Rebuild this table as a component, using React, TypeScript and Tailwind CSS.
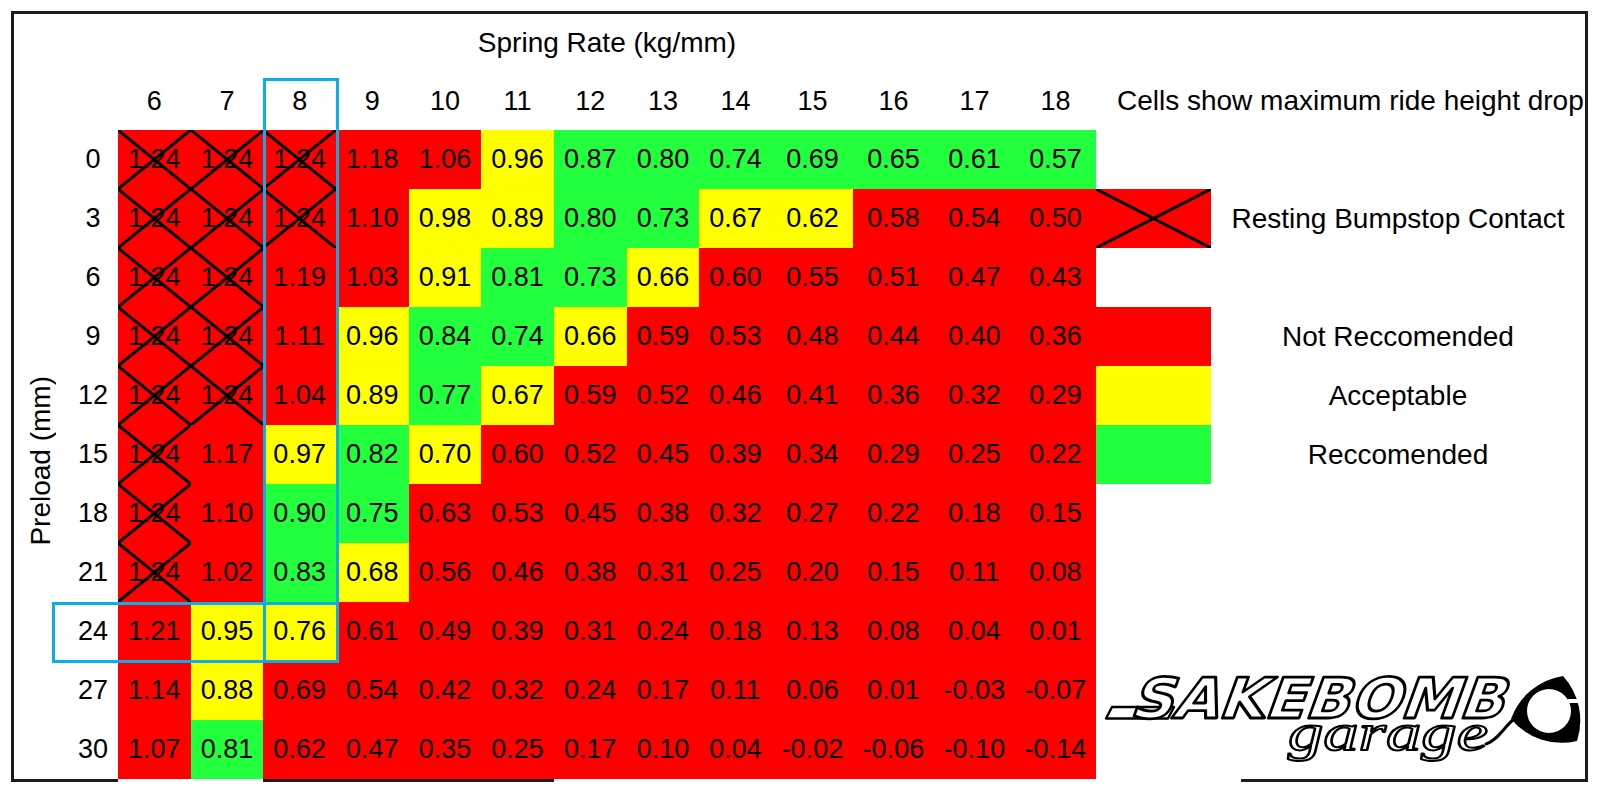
import React from 'react';

type Row = { preload: number; values: string[]; tones: string; crossed: number };

const RATES = [6, 7, 8, 9, 10, 11, 12, 13, 14, 15, 16, 17, 18];

const ROWS: Row[] = [
  { preload: 0, crossed: 3, tones: 'rrrrryggggggg', values: ['1.24', '1.24', '1.24', '1.18', '1.06', '0.96', '0.87', '0.80', '0.74', '0.69', '0.65', '0.61', '0.57'] },
  { preload: 3, crossed: 3, tones: 'rrrryyggyyrrr', values: ['1.24', '1.24', '1.24', '1.10', '0.98', '0.89', '0.80', '0.73', '0.67', '0.62', '0.58', '0.54', '0.50'] },
  { preload: 6, crossed: 2, tones: 'rrrryggyrrrrr', values: ['1.24', '1.24', '1.19', '1.03', '0.91', '0.81', '0.73', '0.66', '0.60', '0.55', '0.51', '0.47', '0.43'] },
  { preload: 9, crossed: 2, tones: 'rrryggyrrrrrr', values: ['1.24', '1.24', '1.11', '0.96', '0.84', '0.74', '0.66', '0.59', '0.53', '0.48', '0.44', '0.40', '0.36'] },
  { preload: 12, crossed: 2, tones: 'rrrygyrrrrrrr', values: ['1.24', '1.24', '1.04', '0.89', '0.77', '0.67', '0.59', '0.52', '0.46', '0.41', '0.36', '0.32', '0.29'] },
  { preload: 15, crossed: 1, tones: 'rrygyrrrrrrrr', values: ['1.24', '1.17', '0.97', '0.82', '0.70', '0.60', '0.52', '0.45', '0.39', '0.34', '0.29', '0.25', '0.22'] },
  { preload: 18, crossed: 1, tones: 'rrggrrrrrrrrr', values: ['1.24', '1.10', '0.90', '0.75', '0.63', '0.53', '0.45', '0.38', '0.32', '0.27', '0.22', '0.18', '0.15'] },
  { preload: 21, crossed: 1, tones: 'rrgyrrrrrrrrr', values: ['1.24', '1.02', '0.83', '0.68', '0.56', '0.46', '0.38', '0.31', '0.25', '0.20', '0.15', '0.11', '0.08'] },
  { preload: 24, crossed: 0, tones: 'ryyrrrrrrrrrr', values: ['1.21', '0.95', '0.76', '0.61', '0.49', '0.39', '0.31', '0.24', '0.18', '0.13', '0.08', '0.04', '0.01'] },
  { preload: 27, crossed: 0, tones: 'ryrrrrrrrrrrr', values: ['1.14', '0.88', '0.69', '0.54', '0.42', '0.32', '0.24', '0.17', '0.11', '0.06', '0.01', '-0.03', '-0.07'] },
  { preload: 30, crossed: 0, tones: 'rgrrrrrrrrrrr', values: ['1.07', '0.81', '0.62', '0.47', '0.35', '0.25', '0.17', '0.10', '0.04', '-0.02', '-0.06', '-0.10', '-0.14'] },
];

// the last four columns are wider (they hold negative numbers)
const colWidth = (i: number) => (i < 9 ? 'w-[72.67px]' : 'w-[81px]');

const toneBg = (t: string) =>
  t === 'g' ? 'bg-[#21ff3d]' : t === 'y' ? 'bg-[#ffff00]' : 'bg-[#ff0000]';

function Cross() {
  return (
    <svg className="absolute inset-0 h-full w-full" viewBox="0 0 100 100" preserveAspectRatio="none">
      <line x1="0" y1="0" x2="100" y2="100" stroke="#000" strokeWidth="3" vectorEffect="non-scaling-stroke" />
      <line x1="100" y1="0" x2="0" y2="100" stroke="#000" strokeWidth="3" vectorEffect="non-scaling-stroke" />
    </svg>
  );
}

function LegendItem({ tone, label, cross }: { tone: string; label: string; cross?: boolean }) {
  return (
    <div className="flex h-[59px]">
      <div className={`relative w-[115px] ${toneBg(tone)}`}>{cross && <Cross />}</div>
      <div className="flex flex-1 items-center justify-center text-[28px]">{label}</div>
    </div>
  );
}

function Logo() {
  return (
    <svg width="489" height="118" viewBox="1096 661 489 118">
      <path d="M1106 718.5 L1168 718.5 L1174 707 L1112 707 Z" fill="#fff" stroke="#000" strokeWidth="2.4" strokeLinejoin="round" />
      <text
        x="1128"
        y="718"
        transform="translate(262 0) skewX(-20)"
        fontFamily="'DejaVu Sans', sans-serif"
        fontWeight="700"
        fontSize="56"
        textLength="374"
        lengthAdjust="spacingAndGlyphs"
        fill="#fff"
        stroke="#000"
        strokeWidth="2.8"
        strokeLinejoin="round"
      >
        SAKEBOMB
      </text>
      <text
        x="1288"
        y="750"
        fontFamily="'Liberation Serif', serif"
        fontStyle="italic"
        fontSize="52"
        textLength="200"
        lengthAdjust="spacingAndGlyphs"
        fill="#fff"
        stroke="#000"
        strokeWidth="2"
        strokeLinejoin="round"
      >
        garage
      </text>
      <path d="M1486 744 C1498 740 1504 727 1514 719" stroke="#000" strokeWidth="3" fill="none" strokeLinecap="round" />
      {/* rotor */}
      <path d="M1511 719 A66 66 0 0 1 1563 676 A66 66 0 0 1 1577 741 A66 66 0 0 1 1511 719 Z" fill="#000" />
      <circle cx="1549" cy="711" r="22" fill="#fff" />
      <rect x="1568" y="699" width="14" height="4" fill="#fff" />
    </svg>
  );
}

export default function App() {
  return (
    <div className="h-[793px] w-[1600px] overflow-hidden bg-white pl-[11px] pt-[11px] text-black [font-family:'Liberation_Sans',Arial,sans-serif]">
      <div className="relative w-[1577px] border-x-[3px] border-t-[3px] border-[#1c1c1c]">
        {/* title */}
        <div className="flex h-[58px]">
          <div className="w-[104px]" />
          <div className="flex w-[978px] items-center justify-center text-[28px]">Spring Rate (kg/mm)</div>
        </div>

        {/* spring rate header */}
        <div className="flex h-[58px]">
          <div className="w-[104px]" />
          {RATES.map((r, i) => (
            <div key={r} className={`flex items-center justify-center text-[27px] ${colWidth(i)}`}>
              {r}
            </div>
          ))}
          <div className="flex flex-1 items-center whitespace-nowrap pl-[21px] text-[28px]">
            Cells show maximum ride height drop
          </div>
        </div>

        {/* body */}
        <div className="flex">
          <div className="flex w-[54px] items-center justify-center pt-[12px]">
            <span className="rotate-180 whitespace-nowrap text-[28px] [writing-mode:vertical-rl]">Preload (mm)</span>
          </div>

          <div className="flex flex-col">
            {ROWS.map((row) => (
              <div key={row.preload} className="flex h-[59px]">
                <div className="flex w-[50px] items-center justify-center text-[27px]">{row.preload}</div>
                {row.values.map((v, i) => (
                  <div
                    key={i}
                    className={`relative flex items-center justify-center text-[27px] ${colWidth(i)} ${toneBg(row.tones[i])}`}
                  >
                    {v}
                    {i < row.crossed && <Cross />}
                  </div>
                ))}
              </div>
            ))}
          </div>

          <div className="flex flex-1 flex-col">
            <div className="h-[59px]" />
            <LegendItem tone="r" label="Resting Bumpstop Contact" cross />
            <div className="h-[59px]" />
            <LegendItem tone="r" label="Not Reccomended" />
            <LegendItem tone="y" label="Acceptable" />
            <LegendItem tone="g" label="Reccomended" />
            <div className="h-[177px]" />
            <div className="h-[118px]">
              <Logo />
            </div>
          </div>
        </div>

        {/* bottom rule, broken where the cells run to the edge */}
        <div className="flex h-[3px]">
          <div className="w-[104px] bg-[#1c1c1c]" />
          <div className="w-[145.33px]" />
          <div className="w-[290.67px] bg-[#1c1c1c]" />
          <div className="w-[687.33px]" />
          <div className="flex-1 bg-[#1c1c1c]" />
        </div>

        {/* highlight boxes */}
        <div className="pointer-events-none absolute left-[249px] top-[64px] h-[585px] w-[76px] border-[3px] border-[#0aaeea]" />
        <div className="pointer-events-none absolute left-[38px] top-[588px] h-[61px] w-[287px] border-[3px] border-[#0aaeea]" />
      </div>
    </div>
  );
}
